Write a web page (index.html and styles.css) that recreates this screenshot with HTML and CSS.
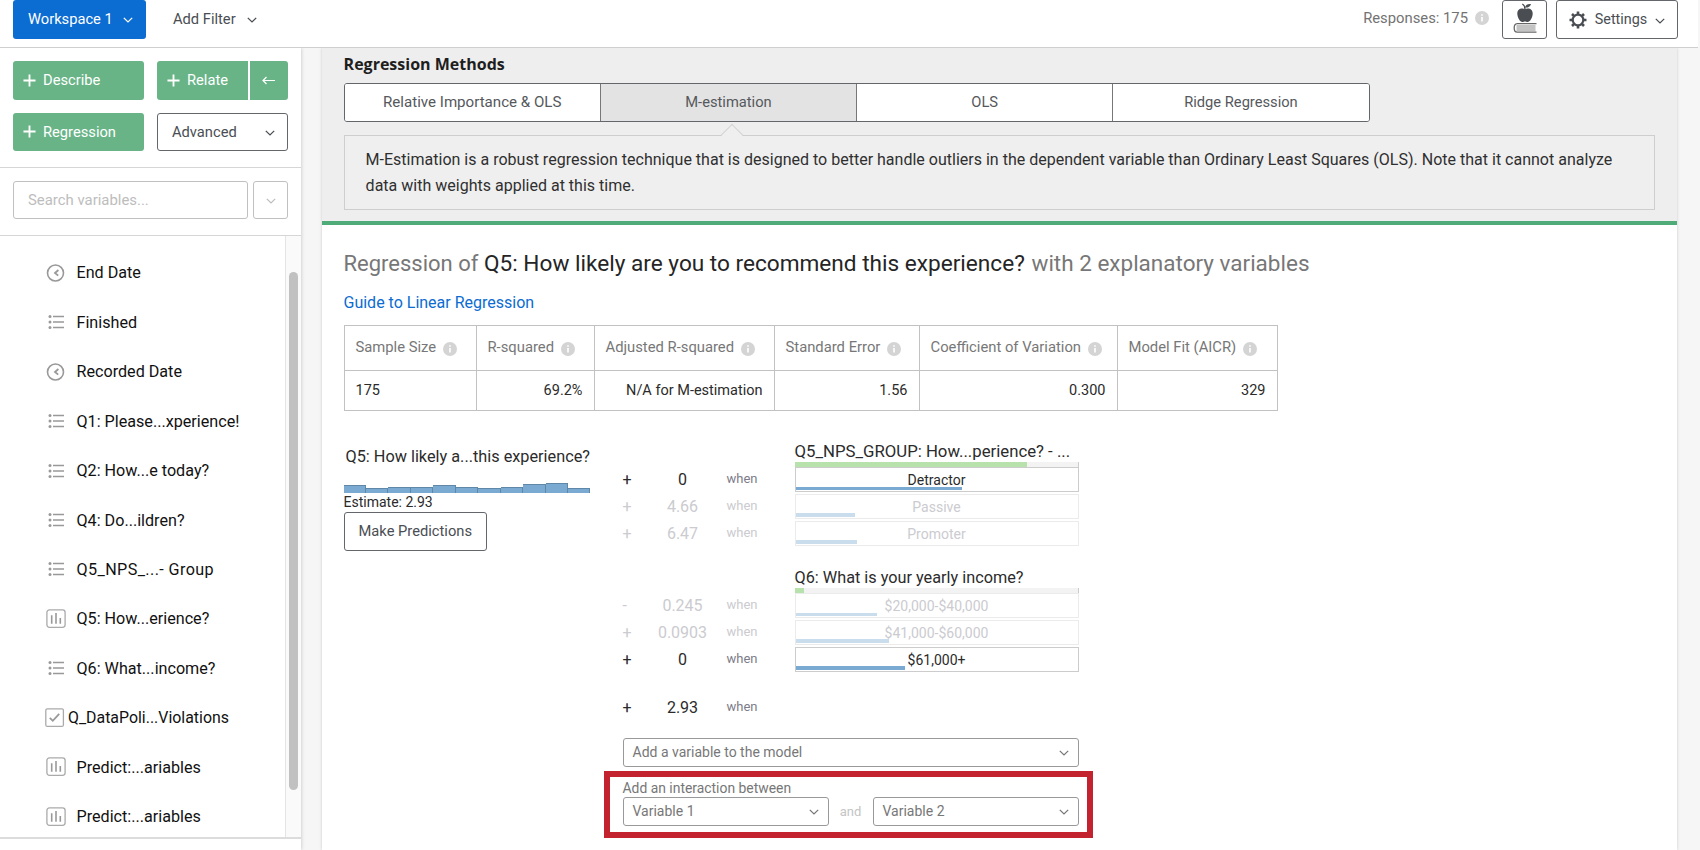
FILE: index.html
```html
<!DOCTYPE html>
<html lang="en">
<head>
  <meta charset="UTF-8" />
  <meta name="viewport" content="width=device-width, initial-scale=1.0" />
  <title>Workspace 1 - Regression</title>
  <link rel="stylesheet" href="styles.css">
</head>
<body>
  <svg class="sprite" width="0" height="0">
    <symbol id="chevron" viewBox="0 0 10 6"><path d="M.8.9 5 4.9 9.2.9" fill="none" stroke="currentColor" stroke-width="1.3"/></symbol>
    <symbol id="plus" viewBox="0 0 14 14"><path d="M7 .5v13M.5 7h13" stroke="currentColor" stroke-width="2"/></symbol>
    <symbol id="clock" viewBox="0 0 20 20"><circle cx="9.5" cy="10" r="8" fill="none" stroke="#999" stroke-width="1.6"/><path d="M12.4 7 9 10l3.200 2.600" fill="none" stroke="#999" stroke-width="1.800"/></symbol>
    <symbol id="list" viewBox="0 0 20 20"><path d="M7 4.5h11M7 10h11M7 15.5h11" stroke="#999" stroke-width="1.6"/><g fill="#999"><circle cx="4" cy="4.5" r="1.5"/><circle cx="4" cy="10" r="1.5"/><circle cx="4" cy="15.5" r="1.5"/></g></symbol>
    <symbol id="bars" viewBox="0 0 20 20"><rect x=".9" y=".9" width="18.2" height="17.4" rx="2.5" fill="none" stroke="#aaa" stroke-width="1.3"/><path d="M5.7 6.2v8.5M10 4v10.7M14.3 9v5.7" stroke="#999" stroke-width="1.6"/></symbol>
    <symbol id="check" viewBox="0 0 20 20"><rect x=".8" y=".8" width="17.6" height="17.6" rx="1.5" fill="none" stroke="#aaa" stroke-width="1.3"/><path d="m4.8 9.8 3 3 6.4-7" fill="none" stroke="#999" stroke-width="1.8"/></symbol>
    <symbol id="info" viewBox="0 0 14 14"><circle cx="7" cy="7" r="7" fill="#d4d4d4"/><path d="M7 6v4.6M7 3.2v1.6" stroke="#fff" stroke-width="1.6"/></symbol>
  </svg>

  <header class="topbar">
    <button class="btn btn-workspace">Workspace 1 <svg class="chev"><use href="#chevron"/></svg></button>
    <button class="btn btn-filter">Add Filter <svg class="chev"><use href="#chevron"/></svg></button>
    <span class="responses">Responses: 175</span>
    <svg class="info"><use href="#info"/></svg>
    <button class="btn btn-outline btn-learn">
      <svg width="24" height="31" viewBox="0 0 24 31">
        <path d="M12 6.2c-2-1.5-7.7-1.4-7.7 4.3 0 4.2 2.8 8.5 5 8.5 1.2 0 1.7-.5 2.7-.5s1.5.5 2.7.5c2.2 0 5-4.3 5-8.500 0-5.700-5.700-5.800-7.700-4.300z" fill="#4a4e53"/>
        <path d="M12 6.5C12 4 11.3 2 9.3 1" fill="none" stroke="#4a4e53" stroke-width="1.3"/>
        <path d="M12 4.5c.5-2.500 3-3.700 6-3.300-1 2.600-3.300 3.700-6 3.300z" fill="#4a4e53"/>
        <path d="M23.5 20.700H4.200C2 20.700 1.200 22.500 1.200 25s.8 4.200 3 4.200h19.300" fill="none" stroke="#666" stroke-width="1.3"/>
        <path d="M3.5 23h19M3.5 25h19M3.5 27h19" stroke="#888" stroke-width="1.2"/>
      </svg>
    </button>
    <button class="btn btn-outline btn-settings">
      <svg width="18" height="18" viewBox="0 0 18 18">
        <circle cx="9" cy="9" r="5.3" fill="none" stroke="#4a4e53" stroke-width="2.2"/>
        <path d="M9 .5v3M9 14.5v3M.5 9h3M14.5 9h3M3 3l2 2M13 13l2 2M15 3l-2 2M5 13l-2 2" stroke="#4a4e53" stroke-width="2.6"/>
      </svg>
      Settings <svg class="chev"><use href="#chevron"/></svg>
    </button>
  </header>

  <div class="workspace">
    <aside class="sidebar">
      <div class="actions">
        <button class="btn btn-green"><svg class="plus"><use href="#plus"/></svg>Describe</button>
        <div class="split">
          <button class="btn btn-green btn-relate"><svg class="plus"><use href="#plus"/></svg>Relate</button>
          <button class="btn btn-green btn-arrow"><svg width="13" height="9" viewBox="0 0 13 9"><path d="M13 4.5H1.2M4.5 1 1 4.5 4.5 8" fill="none" stroke="currentColor" stroke-width="1.2"/></svg></button>
        </div>
        <button class="btn btn-green"><svg class="plus"><use href="#plus"/></svg>Regression</button>
        <button class="btn btn-outline btn-advanced">Advanced <svg class="chev"><use href="#chevron"/></svg></button>
      </div>
      <div class="search">
        <input type="text" placeholder="Search variables...">
        <button class="btn btn-more"><svg class="chev"><use href="#chevron"/></svg></button>
      </div>
      <div class="variables">
        <ul>
          <li><svg><use href="#clock"/></svg>End Date</li>
          <li><svg><use href="#list"/></svg>Finished</li>
          <li><svg><use href="#clock"/></svg>Recorded Date</li>
          <li><svg><use href="#list"/></svg>Q1: Please...xperience!</li>
          <li><svg><use href="#list"/></svg>Q2: How...e today?</li>
          <li><svg><use href="#list"/></svg>Q4: Do...ildren?</li>
          <li class="spaced"><svg><use href="#list"/></svg>Q5_NPS_...- Group</li>
          <li><svg><use href="#bars"/></svg>Q5: How...erience?</li>
          <li><svg><use href="#list"/></svg>Q6: What...income?</li>
          <li class="tight"><svg><use href="#check"/></svg>Q_DataPoli...Violations</li>
          <li><svg><use href="#bars"/></svg>Predict:...ariables</li>
          <li><svg><use href="#bars"/></svg>Predict:...ariables</li>
        </ul>
        <div class="scroll-track"><div class="scroll-thumb"></div></div>
      </div>
    </aside>

    <main class="card">
      <section class="methods">
        <h2>Regression Methods</h2>
        <div class="tabs">
          <button class="first">Relative Importance &amp; OLS</button>
          <button class="active">M-estimation</button>
          <button>OLS</button>
          <button>Ridge Regression</button>
        </div>
        <div class="method-note">
          M-Estimation is a robust regression technique that is designed to better handle outliers in the dependent variable than Ordinary Least Squares (OLS). Note that it cannot analyze<br>data with weights applied at this time.
        </div>
      </section>

      <section class="results">
        <h1><span class="lead">Regression of</span> Q5: How likely are you to recommend this experience? <span class="tail">with 2 explanatory variables</span></h1>
        <a class="guide">Guide to Linear Regression</a>

        <table class="stats">
          <colgroup><col class="c1"><col class="c2"><col class="c3"><col class="c4"><col class="c5"><col class="c6"></colgroup>
          <tr>
            <th>Sample Size<svg class="info"><use href="#info"/></svg></th>
            <th>R-squared<svg class="info"><use href="#info"/></svg></th>
            <th>Adjusted R-squared<svg class="info"><use href="#info"/></svg></th>
            <th>Standard Error<svg class="info"><use href="#info"/></svg></th>
            <th>Coefficient of Variation<svg class="info"><use href="#info"/></svg></th>
            <th>Model Fit (AICR)<svg class="info"><use href="#info"/></svg></th>
          </tr>
          <tr>
            <td>175</td><td>69.2%</td><td>N/A for M-estimation</td><td>1.56</td><td>0.300</td><td>329</td>
          </tr>
        </table>

        <div class="model">
          <div class="outcome">
            <div class="outcome-name">Q5: How likely a...this experience?</div>
            <div class="histogram">
              <i style="height: 7.5px"></i><i style="height: 5px"></i><i style="height: 6px"></i><i style="height: 6px"></i><i style="height: 8px"></i><i style="height: 5.5px"></i><i style="height: 4.5px"></i><i style="height: 6px"></i><i style="height: 9px"></i><i style="height: 10px"></i><i style="height: 5px"></i>
            </div>
            <div class="estimate">Estimate: 2.93</div>
            <button class="btn btn-outline btn-predict">Make Predictions</button>
          </div>

          <div class="equation">
            <div class="term">
              <div class="term-name wide">Q5_NPS_GROUP: How...perience? - ...</div>
              <div class="importance"><i style="width: 82%"></i></div>
              <div class="row"><span class="sign">+</span><span class="coef">0</span><span class="when">when</span><div class="level">Detractor<i style="width: 59%"></i></div></div>
              <div class="row off"><span class="sign">+</span><span class="coef">4.66</span><span class="when">when</span><div class="level">Passive<i style="width: 21%"></i></div></div>
              <div class="row off"><span class="sign">+</span><span class="coef">6.47</span><span class="when">when</span><div class="level">Promoter<i style="width: 21.7%"></i></div></div>
            </div>
            <div class="term">
              <div class="term-name">Q6: What is your yearly income?</div>
              <div class="importance"><i style="width: 3.3%"></i></div>
              <div class="row off"><span class="sign">-</span><span class="coef">0.245</span><span class="when">when</span><div class="level">$20,000-$40,000<i style="width: 29%"></i></div></div>
              <div class="row off"><span class="sign">+</span><span class="coef">0.0903</span><span class="when">when</span><div class="level">$41,000-$60,000<i style="width: 33%"></i></div></div>
              <div class="row"><span class="sign">+</span><span class="coef">0</span><span class="when">when</span><div class="level">$61,000+<i style="width: 39%"></i></div></div>
            </div>
            <div class="row constant"><span class="sign">+</span><span class="coef">2.93</span><span class="when">when</span></div>

            <div class="select">Add a variable to the model <svg class="chev"><use href="#chevron"/></svg></div>
            <div class="interaction">
              <label>Add an interaction between</label>
              <div class="pair">
                <div class="select">Variable 1 <svg class="chev"><use href="#chevron"/></svg></div>
                <span>and</span>
                <div class="select">Variable 2 <svg class="chev"><use href="#chevron"/></svg></div>
              </div>
            </div>
          </div>
        </div>
      </section>
    </main>
  </div>
</body>
</html>
```
FILE: styles.css
```css
* {
  box-sizing: border-box;
}

body {
  margin: 0;
  height: 850px;
  overflow: hidden;
  display: flex;
  flex-direction: column;
  background: #f6f6f6;
  color: #2b2b2b;
  font-family: Roboto, sans-serif;
  font-size: 14.7px;
}

.sprite {
  position: absolute;
}

svg {
  display: block;
  flex: none;
}

.chev {
  width: 10px;
  height: 6px;
  margin-top: 2px;
}

.info {
  width: 14px;
  height: 14px;
}

.btn {
  display: flex;
  align-items: center;
  height: 38.5px;
  padding: 0;
  border: 0;
  border-radius: 3px;
  background: none;
  color: #4a4e53;
  font: inherit;
}

.btn-outline {
  border: 1px solid #63666b;
  background: #fff;
}

/* top bar */
.topbar {
  display: flex;
  align-items: flex-start;
  flex: none;
  width: 1698px;
  height: 48px;
  padding-left: 13px;
  background: #fff;
  border-bottom: 1px solid #cfcfcf;
}

.btn-workspace {
  width: 132.5px;
  padding: 0 13px 0 15px;
  justify-content: space-between;
  background: #0b6cd2;
  color: #fff;
}

.btn-filter {
  width: 84px;
  margin-left: 27.5px;
  justify-content: space-between;
}

.responses {
  margin-left: auto;
  line-height: 37px;
  color: #737373;
  font-size: 14.8px;
}

.topbar .info {
  margin: 11px 13px 0 7px;
}

.btn-learn {
  width: 45px;
  margin-right: 9px;
  justify-content: center;
  padding-bottom: 2px;
}

.btn-settings {
  width: 122px;
  margin-right: 20px;
  padding: 1px 12px 0;
  justify-content: space-between;
  font-size: 14.4px;
}

/* sidebar */
.workspace {
  display: flex;
  flex: 1;
  min-height: 0;
}

.sidebar {
  width: 301px;
  flex: none;
  display: flex;
  flex-direction: column;
  background: #fff;
  box-shadow: 0 0 4px rgba(0, 0, 0, .22);
  clip-path: inset(0 -6px 0 0);
}

.actions {
  display: grid;
  grid-template-columns: 131px 131px;
  gap: 13px;
  padding: 13px 13px 15.5px;
  border-bottom: 1px solid #d6d6d6;
}

.btn-green {
  padding-left: 9.5px;
  background: #68b487;
  color: #fff;
}

.plus {
  width: 13px;
  height: 13px;
  margin-right: 7.5px;
}

.split {
  display: flex;
  gap: 1.5px;
}

.btn-relate {
  width: 91px;
  border-radius: 3px 0 0 3px;
}

.btn-arrow {
  flex: 1;
  padding: 0;
  justify-content: center;
  border-radius: 0 3px 3px 0;
}

.btn-advanced {
  padding: 0 12px 0 14px;
  justify-content: space-between;
}

.search {
  display: flex;
  gap: 5px;
  padding: 13px 13px 15.5px;
  border-bottom: 1px solid #d6d6d6;
}

.search input {
  width: 235px;
  height: 38.5px;
  padding: 0 14px;
  border: 1px solid #c0c0c0;
  border-radius: 3px;
  font: inherit;
  font-size: 14.9px;
}

.search input::placeholder {
  color: #bdbdbd;
}

.btn-more {
  width: 35px;
  justify-content: center;
  border: 1px solid #c0c0c0;
  color: #bdbdbd;
}

.variables {
  display: flex;
  height: 603px;
  border-bottom: 2px solid #dcdcdc;
}

.variables ul {
  flex: 1;
  margin: 0;
  padding: 12.6px 0 0 46px;
  list-style: none;
}

.variables li {
  display: flex;
  align-items: center;
  gap: 10.5px;
  height: 49.45px;
  color: #111;
  font-size: 16.15px;
}

.variables .spaced {
  letter-spacing: .4px;
}

.variables li svg {
  width: 20px;
  height: 20px;
}

.variables .tight {
  gap: 4px;
  margin-left: -1px;
  font-size: 15.9px;
}

.tight svg {
  margin-right: -1px;
}

.scroll-track {
  width: 16px;
  padding: 36.5px 3px 0;
  border-left: 1px solid #e4e4e4;
  background: #fafafa;
}

.scroll-thumb {
  height: 518px;
  width: 9px;
  border-radius: 5px;
  background: #c1c1c1;
}

/* main card */
.card {
  width: 1355px;
  margin-left: 21px;
  background: #fff;
  box-shadow: 0 0 3px rgba(0, 0, 0, .18);
  clip-path: inset(0 -5px 0 -5px);
}

.methods {
  height: 177px;
  padding: 5px 21.6px 0;
  background: #eee;
  border-bottom: 4.5px solid #4fab77;
}

.methods h2 {
  margin: 0 0 8px;
  color: #1e1e1e;
  font: bold 16px/22px "Open Sans", sans-serif;
}

.tabs {
  display: flex;
  width: 1026px;
  height: 38.5px;
  border: 1px solid #63666b;
  border-radius: 3px;
  overflow: hidden;
}

.tabs button {
  flex: 1;
  padding: 0;
  border: 0;
  border-right: 1px solid #777;
  background: #fff;
  color: #55585c;
  font: inherit;
}

.tabs .first {
  font-size: 15.1px;
}

.tabs button:last-child {
  border-right: 0;
}

.tabs .active {
  background: #e3e3e3;
}

.method-note {
  position: relative;
  width: 1311px;
  height: 75px;
  margin-top: 13.5px;
  padding: 10.5px 21px;
  border: 1px solid #cecece;
  background: #efefef;
  color: #2f2f2f;
  font-size: 16.02px;
  line-height: 26px;
  white-space: nowrap;
}

/* pointer up to the active tab */
.method-note::before {
  content: "";
  position: absolute;
  left: 379px;
  top: -9px;
  width: 15px;
  height: 15px;
  border: solid #d4d4d4;
  border-width: 1px 0 0 1px;
  background: linear-gradient(135deg, #efefef 50%, transparent 50%);
  transform: rotate(45deg);
}

.results {
  padding: 24.5px 21.5px 0;
}

h1 {
  margin: 0;
  color: #252525;
  font-size: 22.62px;
  font-weight: 400;
  line-height: 26px;
  white-space: nowrap;
}

h1 span {
  color: #777;
}

h1 .lead {
  font-size: 22px;
}

h1 .tail {
  margin-left: 1px;
  font-size: 22.5px;
}

.guide {
  display: block;
  margin: 16.5px 0 12px;
  color: #0b6cd2;
  font-size: 16px;
  line-height: 20px;
}

.stats {
  width: 934px;
  table-layout: fixed;
  border-collapse: collapse;
}

.c1 { width: 132px; }
.c2 { width: 118px; }
.c3 { width: 180px; }
.c4 { width: 145px; }
.c5 { width: 198px; }
.c6 { width: 160px; }

.stats th,
.stats td {
  border: 1px solid #c2c2c2;
  padding: 0 11px;
  white-space: nowrap;
}

.stats th {
  height: 45px;
  padding-bottom: 3px;
  color: #777;
  font-size: 14.8px;
  font-weight: 400;
  text-align: left;
}

.stats .info {
  display: inline-block;
  margin-left: 6.5px;
  vertical-align: -4px;
}

.stats td {
  height: 40px;
  font-size: 14.5px;
  text-align: right;
}

.stats td:first-child {
  text-align: left;
}

/* model */
.model {
  display: flex;
  align-items: flex-start;
  margin-top: 29.5px;
}

.outcome {
  width: 247px;
  margin-right: 32px;
}

.outcome-name {
  padding-left: 2px;
  margin-top: 5px;
  font-size: 16.27px;
  line-height: 22px;
  white-space: nowrap;
}

.histogram {
  display: flex;
  align-items: flex-end;
  height: 25px;
}

.histogram i {
  flex: 1;
  background: #7aaad2;
  border-top: 1px solid #5f87a8;
  border-right: 1px solid #5f87a8;
}

.estimate {
  font-size: 14px;
  line-height: 19.5px;
}

.btn-predict {
  width: 143.5px;
  justify-content: center;
  white-space: nowrap;
}

.equation {
  width: 456px;
}

.term {
  margin-bottom: 21px;
}

.term-name {
  margin-left: 172px;
  font-size: 16.25px;
  line-height: 21px;
  white-space: nowrap;
}

.term-name.wide {
  font-size: 16.75px;
}

.importance {
  height: 5.5px;
  margin-left: 172px;
  background: #f3f3f3;
  border-right: 1px solid #ccc;
}

.importance i {
  display: block;
  height: 100%;
  background: #b8e2ab;
}

.row {
  display: flex;
  align-items: center;
  height: 25px;
  margin-bottom: 1.8px;
}

.sign {
  width: 30px;
  font-size: 16px;
}

.coef {
  width: 60px;
  font-size: 16px;
  text-align: center;
}

.when {
  width: 82px;
  padding: 0 0 2px 14px;
  color: #7c7c8a;
  font-size: 13px;
}

.level {
  position: relative;
  flex: 1;
  height: 25px;
  border: 1px solid #ccc;
  background: #fff;
  font-size: 14px;
  line-height: 24px;
  text-align: center;
}

.level i {
  position: absolute;
  left: 0;
  bottom: 1px;
  height: 3.5px;
  background: #7aaad2;
}

.off .sign,
.off .coef,
.off .when,
.off .level {
  color: #cbcbd0;
}

.off .level {
  border-color: #ebebeb;
}

.off .level i {
  background: #cadded;
}

.constant {
  margin: 23.5px 0 18px;
}

.select {
  display: flex;
  align-items: center;
  justify-content: space-between;
  height: 28.5px;
  padding: 0 9px;
  border: 1px solid #999;
  border-radius: 3px;
  color: #777;
  font-size: 14px;
}

.interaction {
  width: 489px;
  height: 67px;
  margin: 4.5px 0 0 -19px;
  padding: 2px 8px 0 13px;
  border: 6px solid #c2232f;
}

.interaction label {
  display: block;
  color: #777;
  line-height: 18px;
  font-size: 13.9px;
}

.pair {
  display: flex;
  align-items: center;
  justify-content: space-between;
  width: 456px;
}

.pair .select {
  width: 206px;
}

.pair span {
  color: #c4c4c4;
  font-size: 13px;
}
```
